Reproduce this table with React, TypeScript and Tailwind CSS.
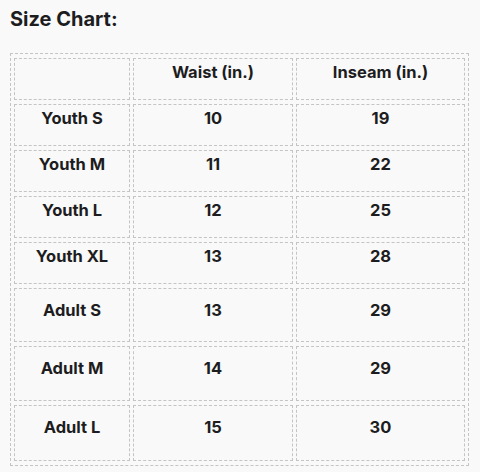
const rows = [
  { size: "Youth S", waist: "10", inseam: "19", h: "h-[42px]", pt: "pt-[3px]" },
  { size: "Youth M", waist: "11", inseam: "22", h: "h-[42px]", pt: "pt-[3px]" },
  { size: "Youth L", waist: "12", inseam: "25", h: "h-[42px]", pt: "pt-[3px]" },
  { size: "Youth XL", waist: "13", inseam: "28", h: "h-[42px]", pt: "pt-[3px]" },
  { size: "Adult S", waist: "13", inseam: "29", h: "h-[54px]", pt: "pt-[11px]" },
  { size: "Adult M", waist: "14", inseam: "29", h: "h-[55px]", pt: "pt-[11px]" },
  { size: "Adult L", waist: "15", inseam: "30", h: "h-[56px]", pt: "pt-[11px]" },
];

const cell =
  "border border-dashed border-[#c4c4c4] align-top text-center p-0 leading-[20px]";

export default function App() {
  return (
    <div
      className="w-[480px] h-[472px] bg-[#f9f9f9] text-[#1d1d1f] px-[10px] pt-[7px]"
      style={{ fontFamily: "Inter, 'Liberation Sans', sans-serif" }}
    >
      <h2 className="text-[20px] font-bold leading-[24px]">Size Chart:</h2>

      <table className="mt-[22px] w-[459px] table-fixed border-separate border-spacing-x-[3px] border-spacing-y-[4px] border border-dashed border-[#c4c4c4] text-[16.5px] font-bold">
        <colgroup>
          <col className="w-[116px]" />
          <col className="w-[160px]" />
          <col className="w-[169px]" />
        </colgroup>
        <thead>
          <tr className="h-[42px]">
            <th className={`${cell} pt-[3px] font-bold`}></th>
            <th className={`${cell} pt-[3px] font-bold`}>Waist (in.)</th>
            <th className={`${cell} pt-[3px] font-bold`}>Inseam (in.)</th>
          </tr>
        </thead>
        <tbody>
          {rows.map((r) => (
            <tr key={r.size} className={r.h}>
              <td className={`${cell} ${r.pt}`}>{r.size}</td>
              <td className={`${cell} ${r.pt}`}>{r.waist}</td>
              <td className={`${cell} ${r.pt}`}>{r.inseam}</td>
            </tr>
          ))}
        </tbody>
      </table>
    </div>
  );
}
